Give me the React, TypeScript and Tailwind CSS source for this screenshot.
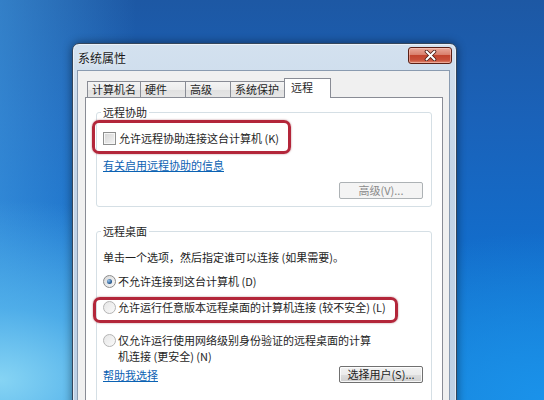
import React from "react";

const font = "font-['Noto_Sans_CJK_SC','Noto_Sans',sans-serif]";

function Checkbox() {
  return (
    <div className="w-[13px] h-[13px] border border-[#8e8f8f] bg-[linear-gradient(135deg,#d4d4d4_0%,#f4f4f4_100%)] shadow-[inset_0_0_0_1px_#f6f6f6] shrink-0" />
  );
}

function Radio({ checked }: { checked?: boolean }) {
  return (
    <div
      className={
        "w-[13px] h-[13px] rounded-full border flex items-center justify-center shrink-0 " +
        (checked
          ? "border-[#8b8b8b] bg-[linear-gradient(135deg,#d8d8d8_0%,#f8f8f8_100%)]"
          : "border-[#b4b4b4] bg-[linear-gradient(135deg,#e6e6e6_0%,#fafafa_100%)]")
      }
    >
      {checked && (
        <div className="w-[5px] h-[5px] rounded-full bg-[radial-gradient(circle_at_35%_35%,#9cc6ee_0%,#2c5f95_60%,#1d3f66_100%)]" />
      )}
    </div>
  );
}

function Tab({ w, children }: { w: string; children: React.ReactNode }) {
  return (
    <div
      className={
        w +
        " h-[17px] -ml-px first:ml-0 border border-[#898c95] bg-[linear-gradient(180deg,#f4f4f4_0%,#ececec_50%,#e0e0e0_51%,#e6e6e6_100%)] pl-[4px] text-[11px] leading-[15px] text-[#1e1e1e]"
      }
    >
      {children}
    </div>
  );
}

function Button({ disabled, children }: { disabled?: boolean; children: React.ReactNode }) {
  return (
    <div
      className={
        "w-[84px] h-[17px] rounded-[2px] border flex items-center justify-center text-[11px] leading-[15px] " +
        (disabled
          ? "border-[#adb2b5] bg-[#f4f4f4] text-[#8a8a8a]"
          : "border-[#707070] bg-[linear-gradient(180deg,#f2f2f2_0%,#ebebeb_50%,#dddddd_51%,#cfcfcf_100%)] text-[#1e1e1e] shadow-[inset_0_0_0_1px_rgba(255,255,255,0.8)]")
      }
    >
      {children}
    </div>
  );
}

export default function App() {
  return (
    <div
      className={
        font +
        " relative w-[544px] h-[400px] overflow-hidden bg-[radial-gradient(ellipse_55%_45%_at_0%_95%,#86d4f4_0%,rgba(90,185,238,0.75)_40%,rgba(40,140,220,0)_100%),radial-gradient(ellipse_70%_60%_at_100%_100%,#1a92ea_0%,rgba(22,144,232,0)_70%),linear-gradient(90deg,rgba(70,160,228,0.55)_0%,rgba(70,160,228,0)_25%),linear-gradient(180deg,#1d58a4_0%,#1a62b9_30%,#136cca_60%,#1780d6_100%)]"
      }
    >
      {/* Window */}
      <div className="absolute left-[72px] top-[43px] w-[385px] h-[380px] rounded-t-[7px] border border-[#34465c] bg-[linear-gradient(180deg,#d3e1ef_0%,#c3d4e7_35%,#bdd0e5_100%)] shadow-[inset_0_0_0_1px_rgba(255,255,255,0.55),0_0_10px_rgba(0,0,0,0.45)] flex flex-col">
        {/* Title bar */}
        <div className="h-[26px] pt-[2px] pl-[5px] flex items-center text-[12px] text-[#1a1a1a] [text-shadow:0_0_6px_rgba(255,255,255,0.9)]">
          系统属性
        </div>
        {/* Close button */}
        <div className="absolute right-[4px] top-[3px] w-[44px] h-[17px] rounded-[3px] border border-[#5a2016] bg-[linear-gradient(180deg,#eaa99a_0%,#d97f6c_45%,#c2442d_50%,#c8503a_80%,#e08a72_100%)] shadow-[inset_0_0_0_1px_rgba(255,210,200,0.5)] flex items-center justify-center">
          <svg width="13" height="11" viewBox="0 0 13 11">
            <path d="M2.5 1.5 L10.5 9.5 M10.5 1.5 L2.5 9.5" stroke="#4a1a12" strokeWidth="3.6" strokeLinecap="round" />
            <path d="M2.5 1.5 L10.5 9.5 M10.5 1.5 L2.5 9.5" stroke="#ffffff" strokeWidth="2" strokeLinecap="round" />
          </svg>
        </div>

        {/* Client area */}
        <div className="flex-1 ml-[4px] mr-[6px] border border-[#8a9bb0] bg-[#f0f0f0] pt-[7px] pl-[7px] pr-[6px] flex flex-col">
          {/* Tabs */}
          <div className="flex items-end pl-[2px] relative z-10 -mb-px">
            <Tab w="w-[54px]">计算机名</Tab>
            <Tab w="w-[46px]">硬件</Tab>
            <Tab w="w-[46px]">高级</Tab>
            <Tab w="w-[56px]">系统保护</Tab>
            <div className="w-[47px] h-[20px] -ml-[2px] border border-b-0 border-[#898c95] bg-white pl-[6px] text-[11px] leading-[17px] text-[#1e1e1e]">
              远程
            </div>
          </div>

          {/* Panel */}
          <div className="flex-1 border border-[#898c95] bg-white px-[10px] pt-[7px] text-[11px] text-[#1e1e1e]">
            {/* 远程协助 */}
            <fieldset className="border border-[#d5dfe5] rounded-[3px] pb-[7px]">
              <legend className="ml-[4px] px-[2px] leading-[15px]">远程协助</legend>
              <div className="mt-[10px] h-[16px] pl-[6px] flex items-center gap-[3px] leading-[16px]">
                <Checkbox />
                <span>允许远程协助连接这台计算机 (K)</span>
              </div>
              <div className="mt-[11px] h-[16px] pl-[6px] leading-[16px]">
                <span className="text-[#0b62b3] underline">有关启用远程协助的信息</span>
              </div>
              <div className="mt-[9px] flex justify-end pr-[8px]">
                <Button disabled>高级(V)...</Button>
              </div>
            </fieldset>

            {/* 远程桌面 */}
            <fieldset className="mt-[17px] border border-[#d5dfe5] rounded-[3px] pb-[20px]">
              <legend className="ml-[4px] px-[2px] leading-[15px]">远程桌面</legend>
              <div className="mt-[10px] h-[16px] pl-[6px] leading-[16px]">
                单击一个选项，然后指定谁可以连接 (如果需要)。
              </div>
              <div className="mt-[8px] h-[16px] pl-[6px] flex items-center gap-[2px] leading-[16px]">
                <Radio checked />
                <span>不允许连接到这台计算机 (D)</span>
              </div>
              <div className="mt-[10px] h-[16px] pl-[6px] flex items-center gap-[2px] leading-[16px]">
                <Radio />
                <span>允许运行任意版本远程桌面的计算机连接 (较不安全) (L)</span>
              </div>
              <div className="mt-[17px] pl-[6px] flex items-start gap-[2px] leading-[16px]">
                <div className="mt-[2px]">
                  <Radio />
                </div>
                <span>
                  仅允许运行使用网络级别身份验证的远程桌面的计算
                  <br />
                  机连接 (更安全) (N)
                </span>
              </div>
              <div className="mt-[2px] pl-[6px] pr-[8px] flex items-center justify-between">
                <span className="text-[#0b62b3] underline leading-[16px]">帮助我选择</span>
                <Button>选择用户(S)...</Button>
              </div>
            </fieldset>
          </div>
        </div>
      </div>

      {/* Red annotation outlines */}
      <div className="absolute left-[92px] top-[120px] w-[199px] h-[34px] rounded-[7px] border-[3px] border-[#b3263a] shadow-[0_0_2px_rgba(120,0,20,0.5)]" />
      <div className="absolute left-[93px] top-[297px] w-[305px] h-[26px] rounded-[7px] border-[3px] border-[#b3263a] shadow-[0_0_2px_rgba(120,0,20,0.5)]" />
    </div>
  );
}
